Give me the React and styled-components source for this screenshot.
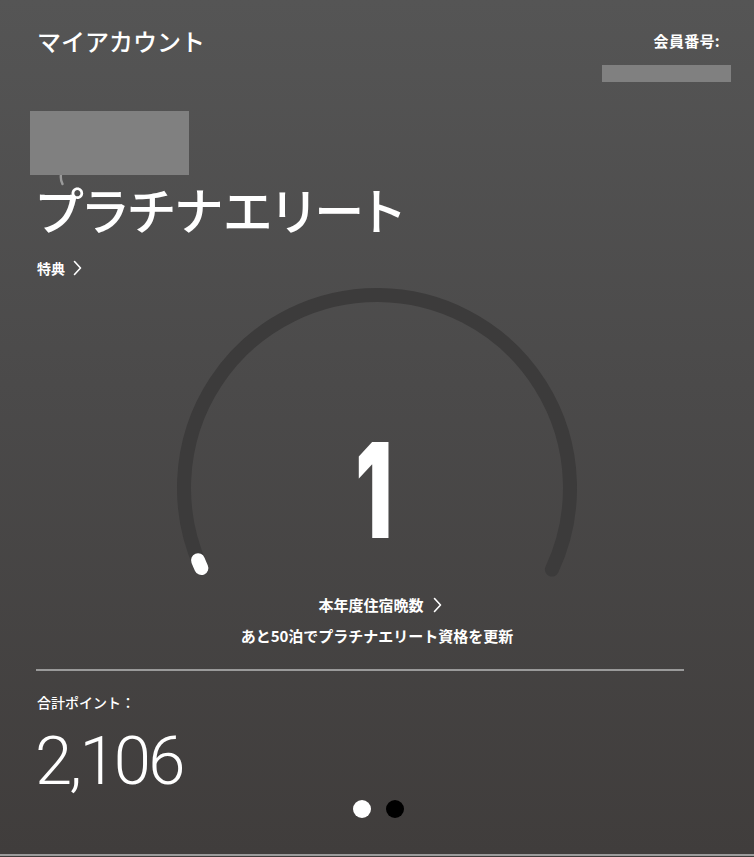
import React from "react";
import styled, { createGlobalStyle } from "styled-components";

const Global = createGlobalStyle`
  html, body { margin: 0; padding: 0; background: #403d3c; }
  body { font-family: "Noto Sans CJK JP", "Noto Sans", sans-serif; color: #fff; }
  * { box-sizing: border-box; }
`;

const Page = styled.div`
  width: 754px;
  height: 856px;
  overflow: hidden;
  background: linear-gradient(180deg, #555555 0%, #4b4a4a 45%, #403d3c 100%);
  border-bottom: 2px solid #9c9c9c;
  padding: 25px 23px 0 37px;
  display: flex;
  flex-direction: column;
`;

const Header = styled.header`
  display: flex;
  justify-content: space-between;
  align-items: flex-start;
`;

const Title = styled.h1`
  margin: 0;
  font-size: 24px;
  line-height: 32px;
  font-weight: 500;
`;

const MemberBlock = styled.div`
  display: flex;
  flex-direction: column;
  align-items: flex-end;
`;

const MemberLabel = styled.span`
  font-size: 15px;
  line-height: 32px;
  font-weight: 700;
  padding-right: 11px;
  letter-spacing: 0.3px;
`;

const Redacted = styled.div`
  position: relative;
  background: #808080;
  width: ${(p) => p.$w}px;
  height: ${(p) => p.$h}px;
  margin-top: ${(p) => p.$mt}px;
  margin-left: ${(p) => p.$ml || 0}px;
`;

const NameWrap = styled.div`
  position: relative;
  align-self: flex-start;
`;

const Hook = styled.svg`
  position: absolute;
  left: 22px;
  top: 91px;
`;

const Tier = styled.h2`
  margin: 3px 0 0;
  font-size: 50px;
  line-height: 60px;
  font-weight: 500;
  font-feature-settings: "palt";
  letter-spacing: 1px;
`;

const LinkRow = styled.div`
  display: flex;
  align-items: center;
  gap: ${(p) => p.$gap || 8}px;
  align-self: ${(p) => (p.$center ? "center" : "flex-start")};
  margin-top: ${(p) => p.$mt}px;
  margin-left: ${(p) => p.$ml || 0}px;
  font-size: ${(p) => p.$size || 14}px;
  line-height: 20px;
  font-weight: 700;
`;

const GaugeWrap = styled.div`
  display: grid;
  align-self: center;
  margin-top: 2px;
  margin-left: -14px;
`;

const GaugeSvg = styled.svg`
  grid-area: 1 / 1;
  display: block;
`;

const Nights = styled.div`
  grid-area: 1 / 1;
  justify-self: center;
  align-self: start;
  margin-top: 144px;
  margin-left: -7px;
  font-family: Inter, "Noto Sans", sans-serif;
  font-weight: 900;
  font-size: 132px;
  line-height: 132px;
  height: 132px;
  transform: scaleX(0.62);
`;

const Caption = styled.p`
  margin: ${(p) => p.$mt}px 0 0;
  align-self: center;
  margin-left: -14px;
  font-size: 15px;
  line-height: 20px;
  font-weight: 700;
`;

const Divider = styled.hr`
  margin: 23px 0 0 -1px;
  width: 648px;
  height: 2px;
  border: 0;
  background: #9a9a9a;
`;

const PointsLabel = styled.div`
  margin-top: 21px;
  font-size: 14px;
  line-height: 20px;
  font-weight: 500;
`;

const PointsValue = styled.div`
  margin-top: 14px;
  font-family: Roboto, "Noto Sans", sans-serif;
  font-weight: 300;
  font-size: 67px;
  line-height: 70px;
  letter-spacing: -2.8px;
  margin-left: -2px;
`;

const Dots = styled.div`
  display: flex;
  gap: 15px;
  align-self: center;
  margin-top: 4px;
  margin-left: -12px;
`;

const Dot = styled.span`
  width: 18px;
  height: 18px;
  border-radius: 50%;
  background: ${(p) => (p.$active ? "#ffffff" : "#000000")};
`;

const Chevron = () => (
  <svg width="9" height="16" viewBox="0 0 9 16" fill="none">
    <path d="M1.5 1.5 L7.5 8 L1.5 14.5" stroke="#fff" strokeWidth="1.6" strokeLinecap="round" strokeLinejoin="round" />
  </svg>
);

const W = 420;
const H = 300;
const CX = 210;
const CY = 208;
const R = 193;

function polar(deg) {
  const rad = (deg * Math.PI) / 180;
  return [CX + R * Math.cos(rad), CY - R * Math.sin(rad)];
}

function arcPath(fromDeg, toDeg) {
  const [x1, y1] = polar(fromDeg);
  const [x2, y2] = polar(toDeg);
  const sweep = fromDeg - toDeg;
  const large = sweep > 180 ? 1 : 0;
  return `M ${x1.toFixed(2)} ${y1.toFixed(2)} A ${R} ${R} 0 ${large} 1 ${x2.toFixed(2)} ${y2.toFixed(2)}`;
}

export default function App() {
  return (
    <>
      <Global />
      <Page>
        <Header>
          <Title>マイアカウント</Title>
          <MemberBlock>
            <MemberLabel>会員番号:</MemberLabel>
            <Redacted $w={129} $h={17} $mt={8} />
          </MemberBlock>
        </Header>

        <NameWrap>
          <Hook width="8" height="14" viewBox="0 0 8 14">
            <path d="M2 1 C1.5 5 1.6 8 3.5 11" stroke="#9a9a9a" strokeWidth="2.4" fill="none" strokeLinecap="round" />
          </Hook>
          <Redacted $w={159} $h={64} $mt={29} $ml={-7} />
        </NameWrap>

        <Tier>プラチナエリート</Tier>

        <LinkRow $mt={20}>
          <span>特典</span>
          <Chevron />
        </LinkRow>

        <GaugeWrap>
          <GaugeSvg width={W} height={H} viewBox={`0 0 ${W} ${H}`}>
            <path d={arcPath(204, -25)} stroke="#3c3b3b" strokeWidth="14" fill="none" strokeLinecap="round" />
            <path d={arcPath(204.5, 202)} stroke="#ffffff" strokeWidth="14" fill="none" strokeLinecap="round" />
          </GaugeSvg>
          <Nights>1</Nights>
        </GaugeWrap>

        <LinkRow $center $mt={15} $size={15} $gap={9} $ml={-8}>
          <span>本年度住宿晩数</span>
          <Chevron />
        </LinkRow>
        <Caption $mt={11}>あと50泊でプラチナエリート資格を更新</Caption>

        <Divider />

        <PointsLabel>合計ポイント：</PointsLabel>
        <PointsValue>2,106</PointsValue>

        <Dots>
          <Dot $active />
          <Dot />
        </Dots>
      </Page>
    </>
  );
}
